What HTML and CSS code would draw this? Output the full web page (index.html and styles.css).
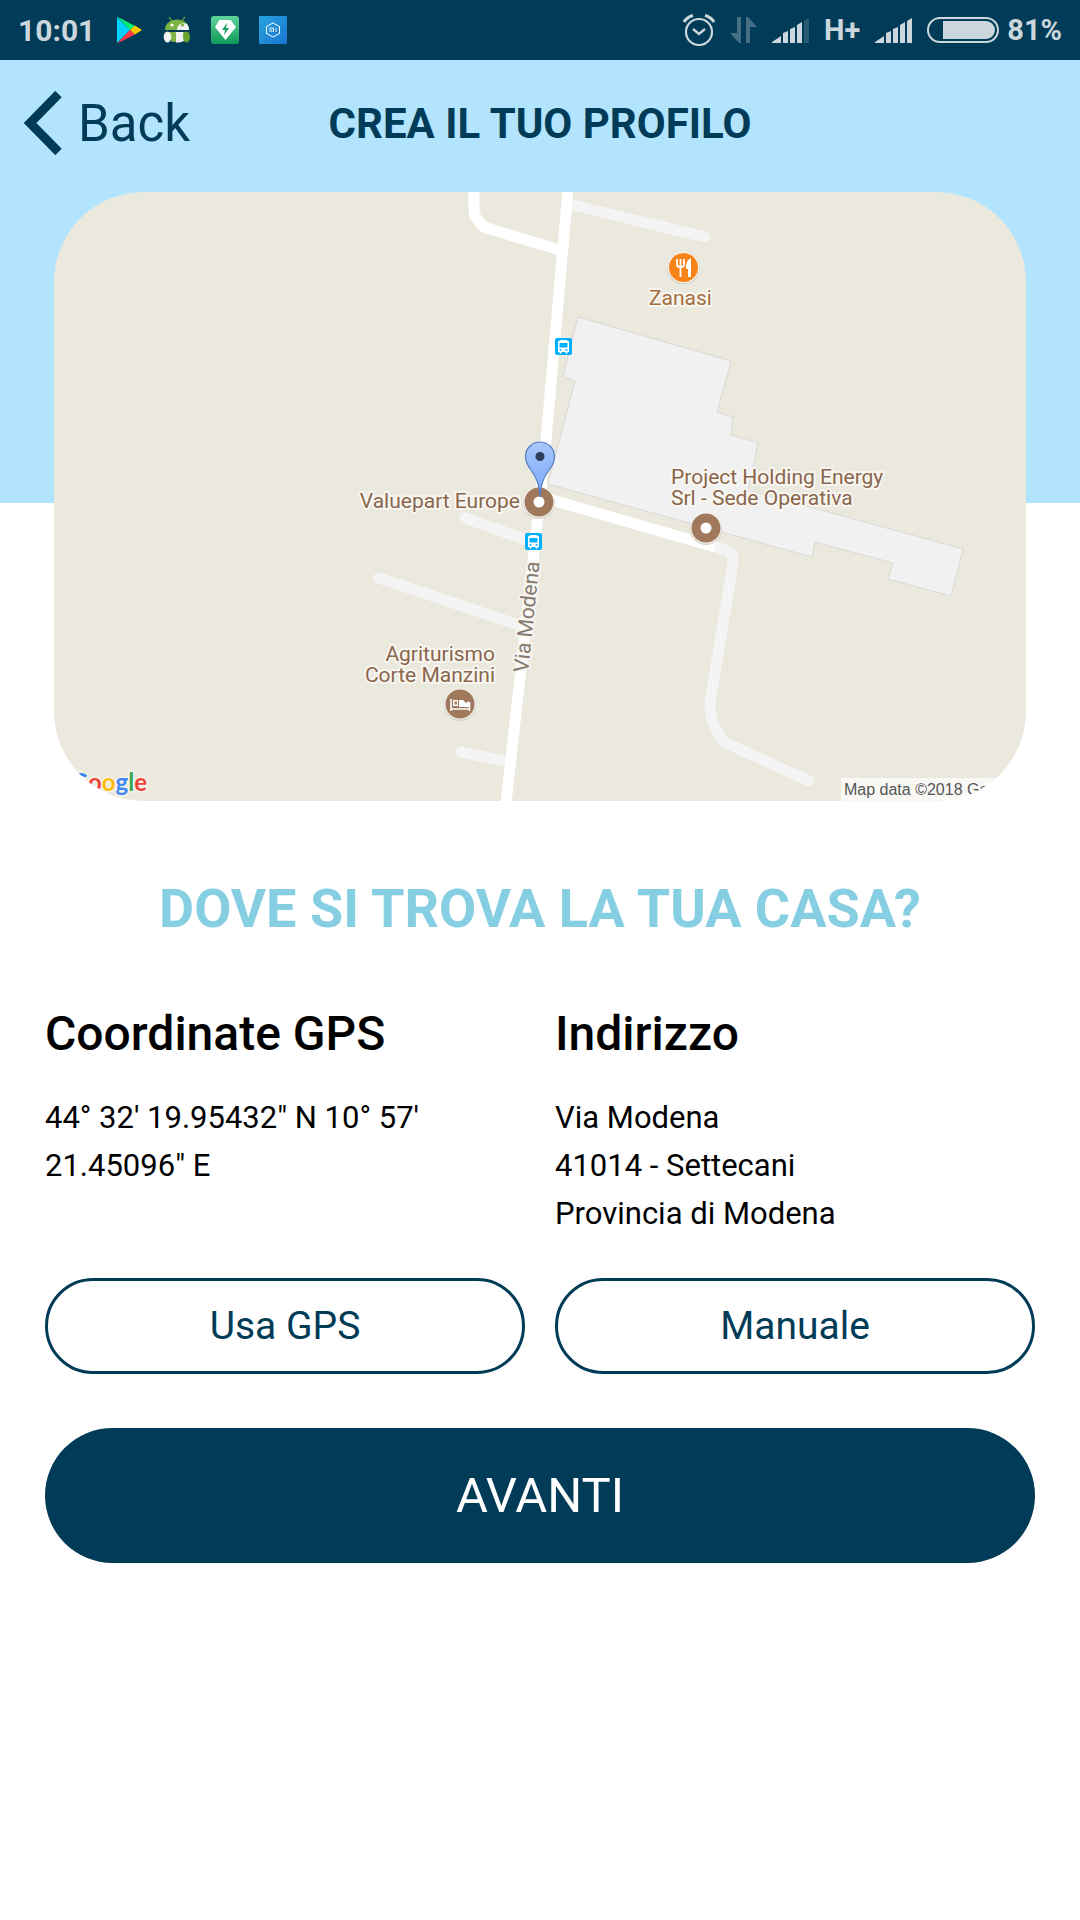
FILE: index.html
```html
<!DOCTYPE html>
<html lang="it">
<head>
<meta charset="utf-8">
<meta name="viewport" content="width=device-width, initial-scale=1">
<title>Crea il tuo profilo</title>
<link rel="stylesheet" href="styles.css">
</head>
<body>
<div class="status-bar">
  <div class="status-group status-left">
    <span class="clock">10:01</span>
    <svg class="app-icon" viewBox="0 0 28 28" aria-hidden="true">
      <path d="M2 1v26L15 14z" fill="#00d2ff"/>
      <path d="M2 0.500L20 10 15 14z" fill="#00f076"/>
      <path d="M2 27.500L20 18.500 15 14z" fill="#ff3a44"/>
      <path d="M20 9.500L27 14 20 18.500 15 14z" fill="#ffc900"/>
    </svg>
    <svg class="app-icon" viewBox="0 0 28 28" aria-hidden="true">
      <path d="M9 5L6 1M19 5l3-4" stroke="#7cb342" stroke-width="1.200"/>
      <path d="M2 14C2 7 8 3.500 14 3.500V14z" fill="#7cb342"/>
      <path d="M14 3.500C20 3.500 26 7 26 14H14z" fill="#7cb342"/>
      <path d="M14 14c0-5 5-8 10-6 1.500 2 2 4 2 6z" fill="#f1f1f1"/>
      <circle cx="9" cy="9" r="1.600" fill="#fff"/><circle cx="19.500" cy="9" r="1.600" fill="#7cb342"/>
      <path d="M3 16h10v10H9z" fill="#7cb342"/><path d="M13 16h8v9q-4 2-8 1.500z" fill="#f1f1f1"/>
      <ellipse cx="4.500" cy="21" rx="3.800" ry="5.500" fill="#f1f1f1"/>
      <path d="M20 16h5l-3 9z" fill="#7cb342"/>
      <ellipse cx="23.500" cy="21" rx="3.500" ry="5.500" fill="#68a130"/>
    </svg>
    <svg class="app-icon" viewBox="0 0 28 28" aria-hidden="true">
      <defs><linearGradient id="gem" x1="0" y1="0" x2="0" y2="1"><stop offset="0" stop-color="#5fd59b"/><stop offset="1" stop-color="#0d9a58"/></linearGradient></defs>
      <rect width="28" height="28" rx="3" fill="url(#gem)"/>
      <path d="M8.500 4h11L25 11 14.500 24 4 11z" fill="#fff"/>
      <path d="M16 7l-5 7h3l-1 5 5-7h-3z" fill="#15a262"/>
    </svg>
    <svg class="app-icon" viewBox="0 0 28 28" aria-hidden="true">
      <defs><linearGradient id="mi" x1="0" y1="0" x2="1" y2="1"><stop offset="0" stop-color="#29a3dd"/><stop offset="1" stop-color="#1876d2"/></linearGradient></defs>
      <rect width="28" height="28" rx="1" fill="url(#mi)"/>
      <path d="M14 7l6.500 3.500v7L14 21l-6.500-3.500v-7z" fill="none" stroke="#fff" stroke-width="1"/>
      <path d="M11 16v-4h3.500v4M12.800 13.500V16M17 12v4" fill="none" stroke="#d9ecfa" stroke-width="1"/>
    </svg>
  </div>
  <div class="status-group status-right">
    <svg width="32" height="32" viewBox="0 0 32 32" fill="none" stroke="#ccd7dd" aria-hidden="true">
      <circle cx="16" cy="18" r="13" stroke-width="2.200"/>
      <path d="M10 15l6 5 6-5" stroke-width="2.400"/>
      <path d="M1 8q3-5 9-6.500M31 8q-3-5-9-6.500" stroke-width="3"/>
    </svg>
    <svg width="27" height="26" viewBox="0 0 27 26" fill="#466f84" aria-hidden="true">
      <path d="M7 0h4v26H9L0 16h7zM16 26h4V10h7L18 0h-2z"/>
    </svg>
    <svg width="37" height="25" viewBox="0 0 37 25" fill="#ccd7dd" aria-hidden="true">
      <path d="M0 25v-1l9-6v7zM11 25V15l5-2v12zM18 25V11l5-2v16zM25 25V7l5-3v21z"/>
      <path d="M32 25V3l5-3v25z" fill="#295a72"/>
    </svg>
    <span class="network">H+</span>
    <svg width="37" height="25" viewBox="0 0 37 25" fill="#ccd7dd" aria-hidden="true">
      <path d="M0 25v-1l9-6v7zM11 25V15l5-2v12zM18 25V11l5-2v16zM25 25V7l5-3v21zM32 25V3l5-3v25z"/>
    </svg>
    <div class="battery">
      <svg width="72" height="26" viewBox="0 0 72 26" aria-hidden="true">
        <rect x="1" y="1" width="70" height="24" rx="12" fill="none" stroke="#ccd7dd" stroke-width="2"/>
        <path d="M16 4h43a9 9 0 0 1 0 18H16z" fill="#ccd7dd"/>
      </svg>
      <span>81%</span>
    </div>
  </div>
</div>

<section class="hero">
  <header class="nav">
    <button class="back" type="button">
      <svg width="38" height="64" viewBox="0 0 38 64" aria-hidden="true"><path d="M34.500 3L6 32l28.500 29" fill="none" stroke="#003b57" stroke-width="9"/></svg>
      Back
    </button>
    <h1 class="nav-title">CREA IL TUO PROFILO</h1>
  </header>
  <svg class="map" viewBox="54 192 972 609" role="img" aria-label="Mappa di Via Modena">
    <defs>
      <linearGradient id="pin" x1="0" y1="0" x2="0" y2="1"><stop offset="0" stop-color="#a9c8fb"/><stop offset="1" stop-color="#78a5fa"/></linearGradient>
      <g id="bus">
        <rect width="17" height="17" rx="2" fill="#00b0ff"/>
        <path d="M3 3.500L6 2h5l3 1.500V14h-1.500v1.500h-2V14h-4v1.500h-2V14H3z" fill="#fff"/>
        <path d="M4.500 5h8v4.500h-8z" fill="#00b0ff"/>
        <circle cx="5.500" cy="12" r="1" fill="#00b0ff"/><circle cx="11.500" cy="12" r="1" fill="#00b0ff"/>
      </g>
      <g id="place">
        <circle cy="1" r="16" fill="#d5d2c9"/><circle r="15.500" fill="#f7f5f0"/><circle r="14.500" fill="#a0785b"/>
      </g>
    </defs>
    <rect x="54" y="192" width="972" height="609" fill="#ebe8dd"/>
    <g class="lane">
      <path d="M572 205L705 237"/>
      <path d="M465 518L532 542"/>
      <path d="M379 578L522 626"/>
      <path d="M461 752L508 762"/>
      <path d="M712 546L726 550Q734 553 733 563L710 703Q709 712 714 725T726 743L809 781"/>
    </g>
    <path d="M578 317L731 361 717 412 733 417 731 435 758 443 751 477 748 490 963 549 951 596 888 579 893 563 815 542 812 557 548 484 575 381 563 377z" fill="#f1f1f1" stroke="#d9d9d5"/>
    <g class="road">
      <path d="M568 190L546 440 538 516 506 803"/>
      <path d="M474 190V211Q474 216 477 219L482 225Q485 228 490 229L560 250"/>
      <path d="M545 498L715 547"/>
    </g>
    <use href="#bus" x="555" y="338"/>
    <use href="#bus" x="525" y="533"/>

    <use href="#place" x="539" y="502"/><circle cx="539" cy="502" r="5.500" fill="#fff"/>
    <use href="#place" x="706" y="528"/><circle cx="706" cy="528" r="5.500" fill="#fff"/>
    <use href="#place" x="460" y="704"/>
    <path d="M451 699v12M469.500 702v9M451 709h18" stroke="#fff" stroke-width="1.600"/>
    <path d="M453 700h5v6h-5zM459 700h4l3 3 3-2v6h-10z" fill="#fff"/><path d="M454.500 701.500h2.500v3h-2.500z" fill="#a0785b"/>
    <circle cx="683.500" cy="268.500" r="16" fill="#d5d2c9"/><circle cx="683.500" cy="267.500" r="15.500" fill="#f7f5f0"/><circle cx="683.500" cy="267.500" r="14.500" fill="#f98219"/>
    <path d="M677 259v6q0 2 3.500 2t3.500-2v-6M680.500 259v18" fill="none" stroke="#fff" stroke-width="1.800"/>
    <path d="M691 258v19h-3v-8h-2q-1-8 5-11z" fill="#fff"/>

    <path d="M540 497C539 483 536 477 531 470 527 465 525.500 462 525.500 456.500A14.500 14.500 0 0 1 554.500 456.500C554.500 462 553 465 549 470 544 477 541 483 540 497z" fill="url(#pin)" stroke="#5380c5" stroke-width="1.200"/>
    <circle cx="540" cy="456.500" r="4.500" fill="#2c3e5c"/>

    <g class="label">
      <text class="food" x="649" y="305">Zanasi</text>
      <text x="671" y="484">Project Holding Energy</text>
      <text x="671" y="505">Srl - Sede Operativa</text>
      <text x="520" y="508" text-anchor="end">Valuepart Europe</text>
      <text x="495" y="661" text-anchor="end">Agriturismo</text>
      <text x="495" y="682" text-anchor="end">Corte Manzini</text>
      <text class="street" transform="translate(528 673) rotate(-84)">Via Modena</text>
    </g>
    <text class="logo" x="147" y="791" text-anchor="end"><tspan fill="#4285f4">G</tspan><tspan fill="#ea4335">o</tspan><tspan fill="#fbbc05">o</tspan><tspan fill="#4285f4">g</tspan><tspan fill="#34a853">l</tspan><tspan fill="#ea4335">e</tspan></text>
    <rect x="841" y="778" width="185" height="23" fill="#fff" fill-opacity=".7"/>
    <text class="credit" x="844" y="795">Map data ©2018 Google</text>
  </svg>
</section>

<main class="content">
  <h2 class="question">DOVE SI TROVA LA TUA CASA?</h2>
  <div class="columns">
    <section class="column">
      <h3>Coordinate GPS</h3>
      <p>44° 32' 19.95432" N 10° 57' 21.45096" E</p>
      <button class="outline" type="button">Usa GPS</button>
    </section>
    <section class="column">
      <h3>Indirizzo</h3>
      <p>Via Modena<br>41014 - Settecani<br>Provincia di Modena</p>
      <button class="outline" type="button">Manuale</button>
    </section>
  </div>
  <button class="next" type="button">AVANTI</button>
</main>
</body>
</html>
```
FILE: styles.css
```css
* {
  box-sizing: border-box;
}

body {
  margin: 0;
  background: #fff;
  color: #000;
  font-family: Roboto, "Liberation Sans", sans-serif;
}

h1, h2, h3, p {
  margin: 0;
}

button {
  font-family: inherit;
  cursor: pointer;
}

/* System bar */
.status-bar {
  display: flex;
  justify-content: space-between;
  height: 60px;
  padding: 0 18px;
  background: #003b57;
  color: #ccd7dd;
  font-size: 29px;
  font-weight: 700;
}

.status-group {
  display: flex;
  align-items: center;
}

.status-left {
  gap: 20px;
}

.status-right {
  gap: 15px;
}

.clock {
  font-size: 30px;
}

.app-icon {
  width: 28px;
  height: 28px;
}

.battery {
  display: flex;
  align-items: center;
  gap: 8px;
}

/* Blue band with the title and the map over its lower edge */
.hero {
  padding-bottom: 1px;
  background: linear-gradient(#b2e5fd 443px, #fff 443px);
}

.nav {
  display: grid;
  grid-template-columns: 1fr auto 1fr;
  align-items: center;
  height: 126px;
  margin-bottom: 6px;
  padding: 0 24px;
  color: #003b57;
}

.back {
  display: flex;
  align-items: center;
  justify-self: start;
  gap: 16px;
  padding: 0;
  border: 0;
  background: none;
  color: inherit;
  font-size: 51px;
}

.nav-title {
  font-size: 42px;
  font-weight: 700;
}

.map {
  display: block;
  width: 90%;
  margin: 0 auto;
  border-radius: 90px;
}

.lane path,
.road path {
  fill: none;
  stroke: #f4f4f4;
  stroke-width: 11px;
  stroke-linecap: round;
}

.road path {
  stroke: #fff;
  stroke-linecap: butt;
}

.label {
  fill: #8a664c;
  stroke: #f8f6f1;
  stroke-width: 4px;
  stroke-linejoin: round;
  paint-order: stroke;
  font-size: 21px;
}

.food {
  fill: #a56c3c;
}

.street {
  fill: #857a72;
}

.logo {
  stroke: #f5f3ec;
  stroke-width: 3px;
  paint-order: stroke;
  font: 700 24px Lato, sans-serif;
}

.credit {
  fill: #555;
  font: 16px "Liberation Sans", sans-serif;
}

/* Home location */
.content {
  padding: 75px 45px 45px;
}

.question {
  color: #86cee2;
  font-size: 54px;
  font-weight: 700;
  line-height: 64px;
  text-align: center;
}

.columns {
  display: grid;
  grid-template-columns: 1fr 1fr;
  gap: 30px;
  margin: 63px 0 54px;
}

.column {
  display: flex;
  flex-direction: column;
}

.column h3 {
  margin-bottom: 30px;
  font-size: 48px;
  font-weight: 500;
  line-height: 60px;
}

.column p {
  flex: 1;
  margin-bottom: 40px;
  font-size: 31px;
  line-height: 48px;
}

.outline {
  height: 96px;
  border: 3px solid #003b57;
  border-radius: 48px;
  background: #fff;
  color: #003b57;
  font-size: 39px;
}

.next {
  width: 100%;
  height: 135px;
  border: 0;
  border-radius: 68px;
  background: #003b57;
  color: #fff;
  font-size: 49px;
}
```
